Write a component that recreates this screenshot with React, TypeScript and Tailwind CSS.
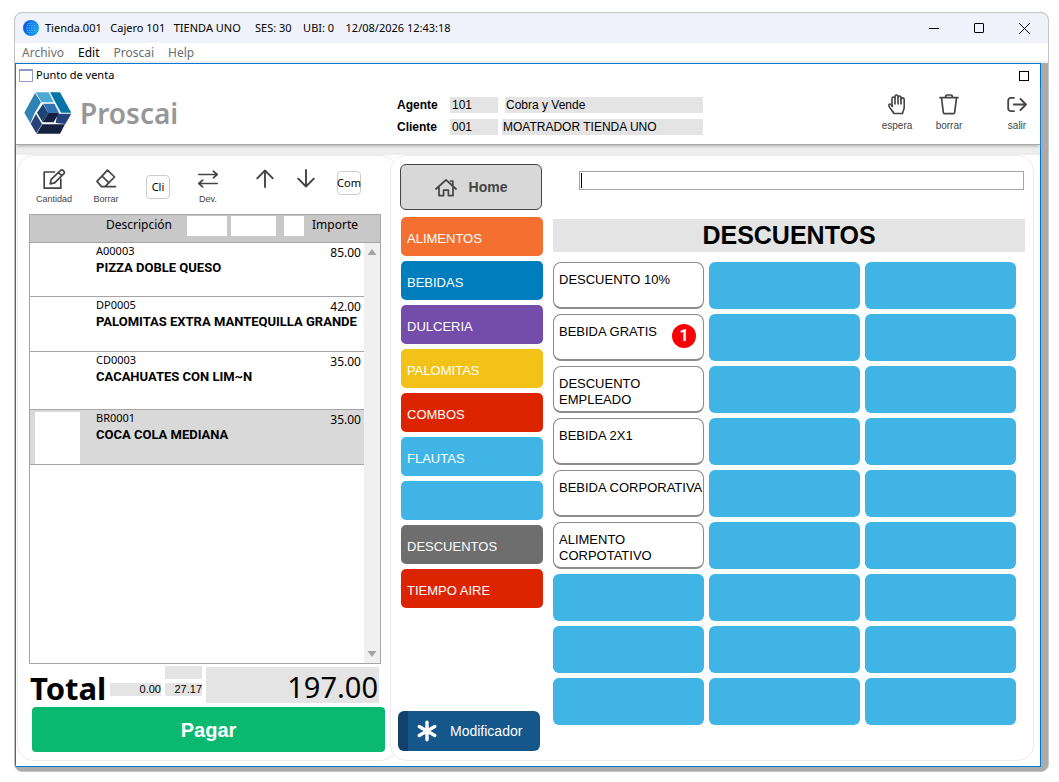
import { useState } from "react";
import type { ReactNode } from "react";
import clsx from "clsx";

type CartItem = {
  code: string;
  name: string;
  amount: string;
  height: string;
  selected?: boolean;
};

const cartItems: CartItem[] = [
  { code: "A00003", name: "PIZZA DOBLE QUESO", amount: "85.00", height: "h-[54px]" },
  { code: "DP0005", name: "PALOMITAS EXTRA MANTEQUILLA GRANDE", amount: "42.00", height: "h-[55px]" },
  { code: "CD0003", name: "CACAHUATES CON LIM~N", amount: "35.00", height: "h-[58px]" },
  { code: "BR0001", name: "COCA COLA MEDIANA", amount: "35.00", height: "h-[55px]", selected: true },
];

const categories = [
  { label: "ALIMENTOS", color: "bg-[#f47031]" },
  { label: "BEBIDAS", color: "bg-[#007dbc]" },
  { label: "DULCERIA", color: "bg-[#744ca9]" },
  { label: "PALOMITAS", color: "bg-[#f2c218]" },
  { label: "COMBOS", color: "bg-[#dc2400]" },
  { label: "FLAUTAS", color: "bg-[#41b4e6]" },
  { label: "", color: "bg-[#41b4e6]" },
  { label: "DESCUENTOS", color: "bg-[#6e6e6e]" },
  { label: "TIEMPO AIRE", color: "bg-[#dc2400]" },
];

const discounts = [
  { label: "DESCUENTO 10%" },
  { label: "BEBIDA GRATIS", badge: 1 },
  { label: "DESCUENTO\nEMPLEADO" },
  { label: "BEBIDA 2X1" },
  { label: "BEBIDA CORPORATIVA" },
  { label: "ALIMENTO\nCORPOTATIVO" },
];

const GRID_ROWS = 9;
const GRID_COLS = 3;

interface IconProps {
  width: number;
  height: number;
  children: ReactNode;
  strokeWidth?: number;
}

const Icon = ({ width, height, children, strokeWidth = 1.7 }: IconProps) => (
  <svg
    width={width}
    height={height}
    viewBox={`0 0 ${width} ${height}`}
    fill="none"
    stroke="currentColor"
    strokeWidth={strokeWidth}
    strokeLinejoin="round"
    strokeLinecap="round"
    aria-hidden="true"
  >
    {children}
  </svg>
);

const GlobeIcon = () => (
  <svg width="16" height="16" viewBox="0 0 16 16" aria-hidden="true">
    <defs>
      <linearGradient id="globe" x1="0" y1="0" x2="1" y2="0.3">
        <stop offset="0" stopColor="#0a50dc" />
        <stop offset="1" stopColor="#18a4f4" />
      </linearGradient>
    </defs>
    <circle cx="8" cy="8" r="8" fill="url(#globe)" />
    <path
      d="M4 5.5h8.500M3.500 8h9.500M4 10.500h8.500M5.500 3.500h5M5.500 12.500h5"
      stroke="#8fd0ff"
      strokeWidth="0.8"
      strokeDasharray="1 1.300"
    />
  </svg>
);

const LogoMark = () => (
  <svg width="48" height="42" viewBox="74 276 144 126" aria-hidden="true">
    <polygon points="75,338 107,279 125,307 106,339 93,370" fill="#2f83b4" />
    <polygon points="109,277 148,277 163,307 127,307" fill="#4ba9d6" />
    <polygon points="152,277 182,277 216,338 185,338" fill="#0474a8" />
    <polygon points="174,341 216,341 198,372 169,369" fill="#25427c" />
    <polygon points="94,371 110,342 128,372 111,400" fill="#25427c" />
    <polygon points="129,373 197,373 182,401 112,401" fill="#14223f" />
    <polygon points="132,311 165,311 179,338 147,339" fill="#2e73b4" />
    <polygon points="131,312 147,339 130,367 113,338" fill="#1c4573" />
    <polygon points="147,339 179,338 163,367 130,367" fill="#14223f" />
  </svg>
);

const HandIcon = () => (
  <Icon width={20} height={21} strokeWidth={1.6}>
    <path d="M5 12V4.500a1.500 1.500 0 0 1 3 0V10" />
    <path d="M8 4V2.500a1.500 1.500 0 0 1 3 0V10" />
    <path d="M11 3.500a1.500 1.500 0 0 1 3 0V10" />
    <path d="M14 5.500a1.500 1.500 0 0 1 3.200 0V13c0 3-1.200 4-1.700 6.500H6.800C6.500 17.500 2.500 14.500 1.800 11.600 1.500 10.200 3 9.500 4 10.500L5.500 12.500" />
  </Icon>
);

const TrashIcon = () => (
  <Icon width={20} height={21}>
    <path d="M1 3.600H19M6.500 3.400C6.500 1.800 7.200 1 8.400 1h3.200c1.200 0 1.900.8 1.900 2.400" />
    <path d="M2.500 4L4.300 18.200a1.500 1.500 0 0 0 1.500 1.500h8.400a1.500 1.500 0 0 0 1.500-1.500L17.500 4" />
  </Icon>
);

const ExitIcon = () => (
  <Icon width={20} height={21} strokeWidth={1.8}>
    <path d="M7 3.800H4A2.800 2.800 0 0 0 1.200 6.600V14.400A2.800 2.800 0 0 0 4 17.200H7" />
    <path d="M6.800 10.500H19M13.500 5L19 10.500 13.500 16" />
  </Icon>
);

const EditIcon = () => (
  <Icon width={24} height={22}>
    <path d="M12.500 4H2.200V20.200H18.800V11" />
    <path d="M8.200 15.800L9.200 11.300 18.600 2.300a1.600 1.600 0 0 1 2.300 0l1 1a1.600 1.600 0 0 1 0 2.300L12.600 14.800ZM16.500 4.500L19.800 7.800" />
  </Icon>
);

const EraserIcon = () => (
  <Icon width={22} height={19}>
    <path d="M12.500 1.200L19.500 8 10 17.600H6.500L2 12.400ZM7 7L14 13.800M6.500 17.700H20.500" />
  </Icon>
);

const SwapIcon = () => (
  <Icon width={20} height={18}>
    <path d="M.8 4.500H19.200M15.300 1.200L19.200 4.500 15.300 7.800M19.200 13.500H.8M4.700 10.200L.8 13.500 4.700 16.800" />
  </Icon>
);

const UpIcon = () => (
  <Icon width={18} height={19} strokeWidth={1.9}>
    <path d="M9 18V1.500M1.200 9.300L9 1.500 16.800 9.300" />
  </Icon>
);

const DownIcon = () => (
  <Icon width={18} height={19} strokeWidth={1.9}>
    <path d="M9 1V17.500M1.200 9.700L9 17.500 16.800 9.700" />
  </Icon>
);

const HomeIcon = () => (
  <Icon width={22} height={19}>
    <path d="M1 11L11 1.800 21 11M17.800 7.500V3H15.500M4 9.500V17.600H8.600V12.200H13.400V17.600H18V9.500" />
  </Icon>
);

const TitleBar = () => (
  <header className="flex h-[30px] items-center justify-between bg-[#eff2fa] pl-2">
    <div className="flex items-center gap-1.5">
      <GlobeIcon />
      <h1 className="text-[11px] whitespace-pre">
        {"Tienda.001   Cajero 101   TIENDA UNO     SES: 30    UBI: 0    12/08/2026 12:43:18"}
      </h1>
    </div>
    <div className="flex items-center gap-[35px] pr-[18px]">
      <button type="button" aria-label="Minimizar" className="flex size-2.5 items-center">
        <span className="h-px w-full bg-black" />
      </button>
      <button type="button" aria-label="Maximizar" className="size-2.5 rounded-[1px] border border-black" />
      <button type="button" aria-label="Cerrar">
        <Icon width={11} height={11} strokeWidth={1}>
          <path d="M.5 .5L10.500 10.500M10.500 .5L.5 10.500" stroke="#000" />
        </Icon>
      </button>
    </div>
  </header>
);

const MenuBar = () => (
  <nav className="flex h-5 items-center gap-[14px] border-b-2 border-[#efefef] bg-white pt-0.5 pl-[7px] text-xs text-[#6d6d6d]">
    <a href="#archivo">Archivo</a>
    <a href="#edit" className="text-black">Edit</a>
    <a href="#proscai">Proscai</a>
    <a href="#help">Help</a>
  </nav>
);

interface ToolButtonProps {
  label?: string;
  name?: string;
  width: string;
  children: ReactNode;
}

const ToolButton = ({ label, name, width, children }: ToolButtonProps) => (
  <button
    type="button"
    aria-label={name}
    className={clsx("flex flex-col items-center font-['Liberation_Sans'] text-[9px] leading-3 text-[#444]", width)}
  >
    <span className="flex h-[23px] items-center">{children}</span>
    {label && <span className="mt-[3px]">{label}</span>}
  </button>
);

const StoreHeader = () => (
  <div className="relative z-10 flex h-[60px] justify-between border-b border-[#a8a8a8] bg-white shadow-[0_2px_3px_-1px_#aaa]">
    <div className="flex items-start gap-2 pt-[7px] pl-2">
      <LogoMark />
      <span className="font-['Noto_Sans'] text-[28px] leading-[42px] font-semibold text-[#979797]">Proscai</span>
    </div>
    <div className="ml-auto grid grid-cols-[49px_48px_201px] content-start gap-x-1 gap-y-1.5 pt-3 font-['Liberation_Sans'] text-xs">
      <label htmlFor="agente" className="font-bold">Agente</label>
      <input id="agente" readOnly value="101" className="h-4 w-full bg-[#e4e4e4] pl-0.5" />
      <input aria-label="Nombre del agente" readOnly value="Cobra y Vende" className="ml-[3px] h-4 bg-[#e4e4e4] pl-px" />
      <label htmlFor="cliente" className="font-bold">Cliente</label>
      <input id="cliente" readOnly value="001" className="h-4 w-full bg-[#e4e4e4] pl-0.5" />
      <input aria-label="Nombre del cliente" readOnly value="MOATRADOR TIENDA UNO" className="h-4 w-full bg-[#e4e4e4] pl-px" />
    </div>
    <div className="ml-[174px] flex items-start gap-3 pt-[9px] pr-[3px] font-['Liberation_Sans'] text-[10px] text-[#444]">
      <button type="button" className="flex w-10 flex-col items-center">
        <HandIcon />
        <span className="leading-[22px]">espera</span>
      </button>
      <button type="button" className="flex w-10 flex-col items-center">
        <TrashIcon />
        <span className="leading-[22px]">borrar</span>
      </button>
      <button type="button" className="ml-4 flex w-10 flex-col items-center">
        <ExitIcon />
        <span className="leading-[22px]">salir</span>
      </button>
    </div>
  </div>
);

const CartToolbar = () => (
  <div className="flex h-[58px] items-start pt-[11px] pl-2">
    <ToolButton label="Cantidad" width="w-14"><EditIcon /></ToolButton>
    <ToolButton label="Borrar" width="w-12"><EraserIcon /></ToolButton>
    <button type="button" className="mt-2 ml-4 h-6 w-6 rounded border border-[#ccc] text-[11px]">Cli</button>
    <ToolButton label="Dev." width="w-10 ml-[18px]"><SwapIcon /></ToolButton>
    <ToolButton name="Subir" width="w-10 ml-[17px]"><UpIcon /></ToolButton>
    <ToolButton name="Bajar" width="w-10 ml-px"><DownIcon /></ToolButton>
    <button type="button" className="mt-1 ml-[11px] flex h-6 w-6 items-center justify-center rounded border border-[#ccc] text-[11px]">
      Com
    </button>
  </div>
);

const CartTable = () => (
  <table className="ml-[11px] w-[352px] table-fixed border-separate border-spacing-0 border border-[#a5a5a5]">
    <colgroup>
      <col className="w-[66px]" />
      <col />
      <col className="w-[58px]" />
      <col className="w-4" />
    </colgroup>
    <thead>
      <tr className="h-7 bg-[#c8c8c8] text-xs">
        <th colSpan={2} className="border-b border-[#a5a5a5] p-0 font-normal">
          <div className="flex h-[27px] pt-px pl-[76px]">
            <span className="leading-[18px]">Descripción</span>
            <div className="ml-auto flex gap-1 pr-0.5">
              <span className="h-5 w-10 bg-white" />
              <span className="h-5 w-[45px] bg-white" />
              <span className="ml-1 h-5 w-5 bg-white" />
            </div>
          </div>
        </th>
        <th className="border-b border-[#a5a5a5] p-0 pr-1.5 text-right align-top leading-5 font-normal">Importe</th>
        <th className="border-b border-[#a5a5a5] p-0" />
      </tr>
    </thead>
    <tbody>
      {cartItems.map((item, index) => (
        <tr key={item.code} className={clsx(item.height, item.selected && "bg-[#d9d9d9]")}>
          <td className="border-b border-[#a5a5a5] p-0">
            {item.selected && <div className="mt-0.5 ml-[5px] h-[52px] w-[45px] bg-white" />}
          </td>
          <td className="overflow-visible border-b border-[#a5a5a5] p-0 align-top whitespace-nowrap">
            <div className="text-[11px] leading-4">{item.code}</div>
            <div className="font-['Roboto'] text-[13px] leading-[17px] font-bold">{item.name}</div>
          </td>
          <td className="border-b border-[#a5a5a5] p-0 pr-[3px] text-right align-top text-xs leading-5">
            {item.amount}
          </td>
          {index === 0 && (
            <td rowSpan={cartItems.length + 1} className="bg-[#f0f0f0] p-0">
              <div className="flex h-[420px] flex-col items-center justify-between py-1.5">
                <svg width="10" height="6" viewBox="0 0 10 6" aria-hidden="true">
                  <path d="M5 0L9.500 6H.5Z" fill="#a3a3a3" />
                </svg>
                <svg width="10" height="6" viewBox="0 0 10 6" aria-hidden="true">
                  <path d="M5 6L9.500 0H.5Z" fill="#a3a3a3" />
                </svg>
              </div>
            </td>
          )}
        </tr>
      ))}
      <tr className="h-[198px]">
        <td colSpan={3} />
      </tr>
    </tbody>
  </table>
);

const CartTotals = () => (
  <div className="flex h-10 items-start pt-[3px] pl-3">
    <strong className="w-20 text-[31px] leading-[42px]">Total</strong>
    <div className="grid grid-cols-[51px_37px] gap-x-1 gap-y-1 font-['Liberation_Sans'] text-[11px] leading-[13px]">
      <span />
      <span className="-mt-px h-[13px] bg-[#e4e4e4]" />
      <output className="h-[13px] bg-[#e4e4e4] text-right">0.00</output>
      <output className="h-[13px] bg-[#e4e4e4] text-right">27.17</output>
    </div>
    <output className="ml-1 h-9 w-[173px] bg-[#e4e4e4] pr-px text-right text-[29px] leading-10">197.00</output>
  </div>
);

const CartPanel = () => (
  <section className="w-[380px] shrink-0 rounded-2xl border border-[#ebebeb] bg-white pb-2">
    <CartToolbar />
    <CartTable />
    <CartTotals />
    <button
      type="button"
      className="mt-[3px] ml-[14px] h-[45px] w-[353px] rounded bg-[#09b96f] font-['Liberation_Sans'] text-xl font-bold text-white"
    >
      Pagar
    </button>
  </section>
);

const CategoryColumn = () => (
  <div className="flex w-[145px] shrink-0 flex-col">
    <button
      type="button"
      className="mr-px ml-0.5 flex h-[46px] items-center justify-center gap-3 rounded-md border border-[#444] bg-[#d8d8d8] font-['Liberation_Sans'] text-sm font-bold text-[#444]"
    >
      <HomeIcon />
      Home
    </button>
    <ul className="mt-[7px] ml-[3px] flex flex-col gap-[5px]">
      {categories.map((category, index) => (
        <li key={index}>
          <button
            type="button"
            aria-label={category.label || "Categoría vacía"}
            className={clsx(
              "block h-[39px] w-full rounded-[5px] px-1.5 pt-1 text-left font-['Liberation_Sans'] text-[13px] text-white",
              category.color
            )}
          >
            {category.label}
          </button>
        </li>
      ))}
    </ul>
    <button
      type="button"
      className="mt-auto mr-[3px] flex h-10 items-center gap-3 rounded-md border-l-10 border-[#12426b] bg-[#15578b] pl-2 font-['Liberation_Sans'] text-sm text-white"
    >
      <Icon width={22} height={22} strokeWidth={3.4}>
        <path d="M11 2.300V19.700M3.200 6.600L18.800 15.400M18.800 6.600L3.200 15.400" />
      </Icon>
      Modificador
    </button>
  </div>
);

const DiscountGrid = () => {
  const cells = [];
  for (let row = 0; row < GRID_ROWS; row++) {
    for (let col = 0; col < GRID_COLS; col++) {
      const discount = col === 0 ? discounts[row] : undefined;
      cells.push(
        discount ? (
          <button
            key={`${row}-${col}`}
            type="button"
            className="relative flex h-[47px] items-start rounded-lg border border-b-2 border-[#8c8c8c] bg-white px-[5px] pt-[9px] text-left whitespace-pre"
          >
            {discount.label}
            {discount.badge && (
              <span className="absolute top-[9px] right-[7px] flex size-6 items-center justify-center rounded-full bg-[#fb0007] font-['Roboto'] text-base font-bold text-white">
                {discount.badge}
              </span>
            )}
          </button>
        ) : (
          <button
            key={`${row}-${col}`}
            type="button"
            aria-label="Vacío"
            className="h-[47px] rounded-md bg-[#41b4e6]"
          />
        )
      );
    }
  }

  return (
    <div className="mt-[10px] mr-[9px] grid grid-cols-3 gap-[5px] font-['Liberation_Sans'] text-[13px] leading-4">
      {cells}
    </div>
  );
};

const SalesPanel = () => {
  const [search, setSearch] = useState("");

  return (
    <section className="-ml-[7px] flex flex-1 gap-[10px] rounded-2xl border border-[#ebebeb] bg-white pt-2 pr-2 pb-[9px] pl-[7px]">
      <CategoryColumn />
      <div className="min-w-0 flex-1">
        <div className="relative mt-[7px] mr-px ml-[26px]">
          <input
            type="text"
            aria-label="Buscar artículo"
            value={search}
            onChange={(e) => setSearch(e.target.value)}
            className="block h-[19px] w-full border border-[#a5a5a5] bg-white px-1 text-xs outline-none"
          />
          <span className="pointer-events-none absolute top-0.5 left-0.5 h-[15px] w-px bg-black" />
        </div>
        <h2 className="mt-[29px] h-[33px] bg-[#e4e4e4] text-center font-['Liberation_Sans'] text-[25px] leading-[33px] font-bold">
          DESCUENTOS
        </h2>
        <DiscountGrid />
      </div>
    </section>
  );
};

const App = () => {
  return (
    <div className="min-h-screen bg-white pt-3 pr-[10px] pb-[10px] pl-[14px] font-['Noto_Sans',sans-serif] text-black">
      <div className="overflow-hidden rounded-lg border border-[#c4c4c4] bg-[#ababab]">
        <TitleBar />
        <MenuBar />
        <main className="mr-[7px] mb-1 border border-[#0078d4] bg-white">
          <div className="flex h-[21px] items-center justify-between pt-0.5 pr-[11px] pl-[3px]">
            <div className="flex items-center gap-[3px] text-[11px]">
              <span className="h-[13px] w-[14px] border border-t-2 border-[#8a9acb] bg-[#fffff8]" />
              Punto de venta
            </div>
            <button type="button" aria-label="Restaurar" className="size-2.5 border border-black" />
          </div>
          <StoreHeader />
          <div className="h-[10px] bg-[#ededed]" />
          <div className="flex pr-1.5 pb-[5px] pl-px">
            <CartPanel />
            <SalesPanel />
          </div>
        </main>
      </div>
    </div>
  );
};

export default App;
